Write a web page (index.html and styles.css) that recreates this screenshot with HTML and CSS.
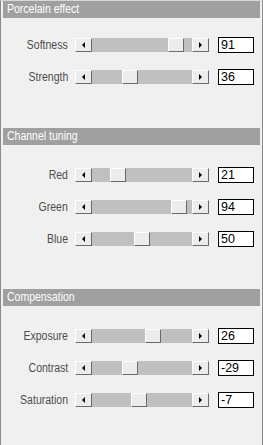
FILE: index.html
```html
<!DOCTYPE html>
<html>
<head>
    <title>Porcelain</title>
    <link rel="stylesheet" href="styles.css">
</head>
<body>
    <div class="panel">

        <div class="section section-porcelain">
            <div class="section-title"><span>Porcelain effect</span></div>
            <div class="rows">
                <div class="row">
                    <span class="label"><span>Softness</span></span>
                    <div class="slider">
                        <span class="btn btn-left"><i></i></span>
                        <span class="track"><span class="thumb" style="--pos:0.91"></span></span>
                        <span class="btn btn-right"><i></i></span>
                    </div>
                    <input class="value" type="text" value="91">
                </div>
                <div class="row">
                    <span class="label"><span>Strength</span></span>
                    <div class="slider">
                        <span class="btn btn-left"><i></i></span>
                        <span class="track"><span class="thumb" style="--pos:0.36"></span></span>
                        <span class="btn btn-right"><i></i></span>
                    </div>
                    <input class="value" type="text" value="36">
                </div>
            </div>
        </div>

        <div class="section section-channel">
            <div class="section-title"><span>Channel tuning</span></div>
            <div class="rows">
                <div class="row">
                    <span class="label"><span>Red</span></span>
                    <div class="slider">
                        <span class="btn btn-left"><i></i></span>
                        <span class="track"><span class="thumb" style="--pos:0.21"></span></span>
                        <span class="btn btn-right"><i></i></span>
                    </div>
                    <input class="value" type="text" value="21">
                </div>
                <div class="row">
                    <span class="label"><span>Green</span></span>
                    <div class="slider">
                        <span class="btn btn-left"><i></i></span>
                        <span class="track"><span class="thumb" style="--pos:0.94"></span></span>
                        <span class="btn btn-right"><i></i></span>
                    </div>
                    <input class="value" type="text" value="94">
                </div>
                <div class="row">
                    <span class="label"><span>Blue</span></span>
                    <div class="slider">
                        <span class="btn btn-left"><i></i></span>
                        <span class="track"><span class="thumb" style="--pos:0.50"></span></span>
                        <span class="btn btn-right"><i></i></span>
                    </div>
                    <input class="value" type="text" value="50">
                </div>
            </div>
        </div>

        <div class="section section-compensation">
            <div class="section-title"><span>Compensation</span></div>
            <div class="rows">
                <div class="row">
                    <span class="label"><span>Exposure</span></span>
                    <div class="slider">
                        <span class="btn btn-left"><i></i></span>
                        <span class="track"><span class="thumb" style="--pos:0.63"></span></span>
                        <span class="btn btn-right"><i></i></span>
                    </div>
                    <input class="value" type="text" value="26">
                </div>
                <div class="row">
                    <span class="label"><span>Contrast</span></span>
                    <div class="slider">
                        <span class="btn btn-left"><i></i></span>
                        <span class="track"><span class="thumb" style="--pos:0.355"></span></span>
                        <span class="btn btn-right"><i></i></span>
                    </div>
                    <input class="value" type="text" value="-29">
                </div>
                <div class="row">
                    <span class="label"><span>Saturation</span></span>
                    <div class="slider">
                        <span class="btn btn-left"><i></i></span>
                        <span class="track"><span class="thumb" style="--pos:0.465"></span></span>
                        <span class="btn btn-right"><i></i></span>
                    </div>
                    <input class="value" type="text" value="-7">
                </div>
            </div>
        </div>

    </div>
</body>
</html>
```

FILE: styles.css
```css
body {
    margin: 0;
    padding: 0;
    background-color: #f0f0f0;
    font-family: "Liberation Sans", Arial, sans-serif;
    font-size: 12.5px;
}

.panel {
    box-sizing: border-box;
    height: 445px;
    padding: 0 2px;
    border-left: 1px solid #8a8a8a;
    border-right: 1px solid #8a8a8a;
    border-top: 1px solid #d8d8d8;
}

/* section spacing */
.section-porcelain .rows { padding-top: 19px; }
.section-porcelain { margin-bottom: 43px; }
.section-channel .rows { padding-top: 22px; }
.section-channel { margin-bottom: 42px; }
.section-compensation .rows { padding-top: 22px; }

.section-title {
    height: 17px;
    line-height: 17px;
    padding-left: 4px;
    background-color: #a0a0a0;
    color: #fff;
    white-space: nowrap;
}

/* the original font is a narrow one */
.section-title span {
    display: inline-block;
    transform: scaleX(0.84);
    transform-origin: left center;
}

.rows {
    display: flex;
    flex-direction: column;
    gap: 16px;
}

.row {
    display: flex;
    align-items: center;
    height: 16px;
}

.label {
    width: 65px;
    margin-right: 7px;
    text-align: right;
    color: #4d4d4d;
    white-space: nowrap;
}

.label span {
    display: inline-block;
    transform: scaleX(0.84);
    transform-origin: right center;
}

.slider {
    display: flex;
    height: 14px;
    width: 134px;
}

.btn {
    box-sizing: border-box;
    width: 17px;
    height: 14px;
    display: flex;
    align-items: center;
    justify-content: center;
    background-color: #ececec;
    border-top: 1px solid #fff;
    border-left: 1px solid #fff;
    border-right: 1px solid #6a6a6a;
    border-bottom: 1px solid #6a6a6a;
}

.btn i {
    width: 0;
    height: 0;
    border-top: 3px solid transparent;
    border-bottom: 3px solid transparent;
}

.btn-left i {
    border-right: 3px solid #000;
}

.btn-right i {
    border-left: 3px solid #000;
}

.track {
    position: relative;
    flex: 1;
    background-color: #c0c0c0;
}

.thumb {
    position: absolute;
    top: 0;
    left: calc(var(--pos) * (100% - 16px));
    box-sizing: border-box;
    width: 16px;
    height: 14px;
    background-color: #ececec;
    border-top: 1px solid #fff;
    border-left: 1px solid #fff;
    border-right: 1px solid #6a6a6a;
    border-bottom: 1px solid #6a6a6a;
}

.value {
    box-sizing: border-box;
    width: 36px;
    height: 16px;
    margin-left: 9px;
    padding: 0 0 0 2px;
    border: 1px solid #000;
    background-color: #fff;
    font-family: inherit;
    font-size: 12.5px;
    color: #000;
    outline: none;
}
```
